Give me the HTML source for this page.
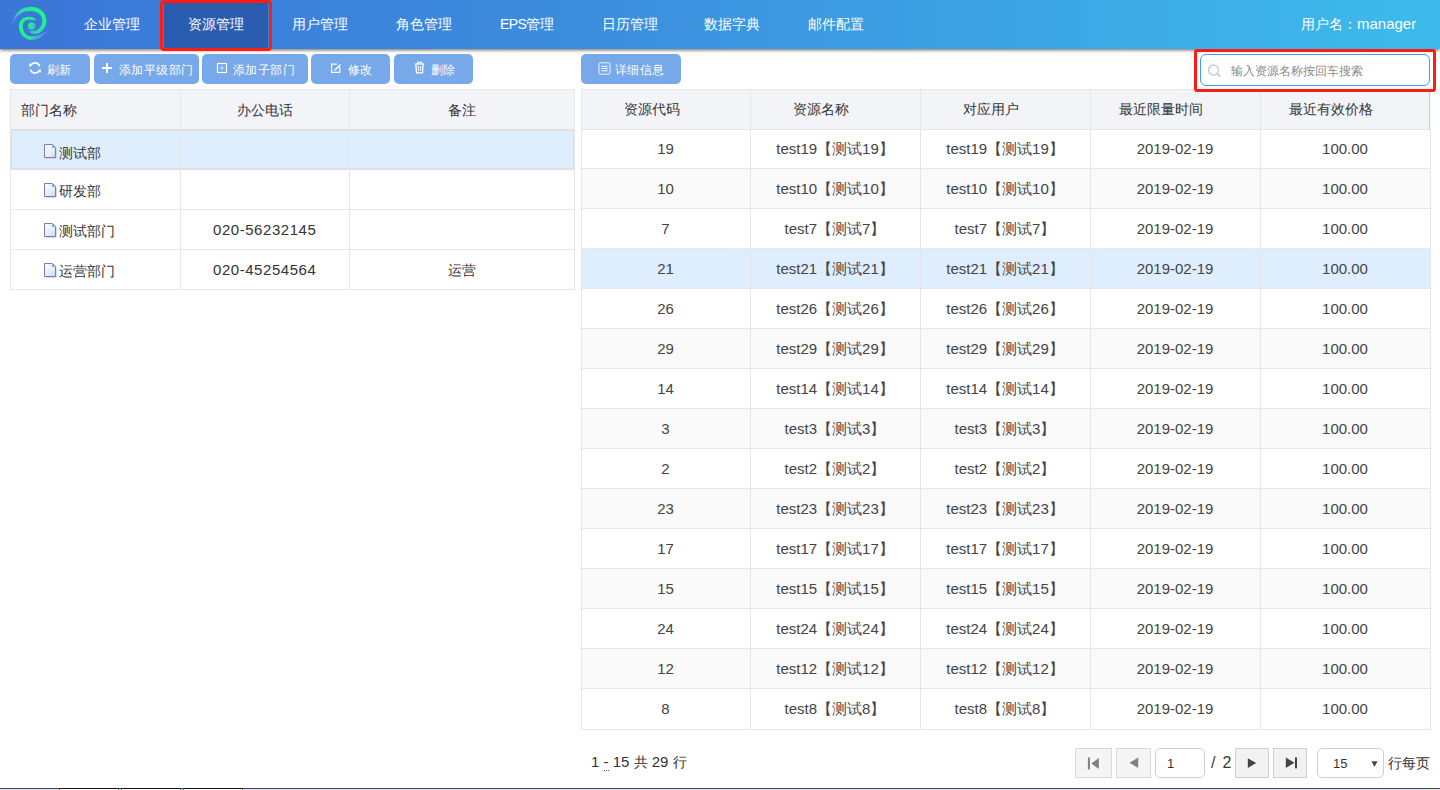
<!DOCTYPE html>
<html><head><meta charset="utf-8">
<style>
*{box-sizing:border-box;margin:0;padding:0}
html,body{width:1440px;height:790px;overflow:hidden;background:#fff;font-family:"Liberation Sans",sans-serif;position:relative}
#hdr{position:absolute;left:0;top:0;width:1440px;height:49px;background:linear-gradient(90deg,#3b75d8 0%,#3c8ddd 40%,#3dbbeb 100%);box-shadow:0 1.5px 3px rgba(50,40,30,0.6);z-index:2}
.nav{position:absolute;top:0;height:48px;width:104px;line-height:48px;text-align:center;color:#fff;font-size:14px;white-space:nowrap}
.nt{position:absolute;top:0;line-height:48px;color:#fff;font-size:14px;white-space:nowrap}
.nav.act{background:#2a5caf;height:49px}
#redtab{position:absolute;left:160px;top:0px;width:112px;height:51px;border:3px solid #ff1c12;border-radius:4px;z-index:3}
#user{position:absolute;left:1301px;top:0;line-height:48px;color:#fff;font-size:14px;white-space:nowrap}
.btn{position:absolute;top:54px;height:30px;background:#76a8ea;border-radius:5px;color:#fff;font-size:12.4px;letter-spacing:0.4px;line-height:30px;white-space:nowrap}
.btn span{position:absolute;top:0.5px}
.btn svg{position:absolute}
.lt{position:absolute;font-size:14px;color:#333;white-space:nowrap}
.vl{position:absolute;width:1px;background:#e6e6e6}
.hl{position:absolute;height:1px;background:#e6e6e6}
.rrow{position:absolute;left:581px;width:850px;height:40px}
.rc{position:absolute;height:40px;line-height:39px;text-align:center;font-size:15px;color:#444;white-space:nowrap}
.rh{position:absolute;top:89px;height:40px;line-height:40px;text-align:center;font-size:14px;color:#333;white-space:nowrap}
#search{position:absolute;left:1200px;top:54px;width:230px;height:32px;border:1px solid #3d9ef2;border-radius:6px;background:#fff}
#searchred{position:absolute;left:1194px;top:49px;width:242px;height:43px;border:3px solid #ff1c12;border-radius:3px;z-index:3}
#ph{position:absolute;left:30px;top:1px;line-height:30px;font-size:12px;color:#8a8a8a;white-space:nowrap}
.pg{position:absolute;top:748px;height:30px;border:1px solid #d9d9d9;background:#f5f5f5}
.fi{position:absolute;left:44px}
</style></head><body>
<div id="hdr">
  <svg style="position:absolute;left:8px;top:2px" width="44" height="44" viewBox="0 0 44 44">
    <defs>
      <linearGradient id="ga" x1="0" y1="0.8" x2="0.9" y2="0.3"><stop offset="0" stop-color="#6a8cf8" stop-opacity="0.7"/><stop offset="0.5" stop-color="#36d4b0"/><stop offset="1" stop-color="#18fa84"/></linearGradient>
      <linearGradient id="gb" x1="0.2" y1="0" x2="1" y2="0.3"><stop offset="0" stop-color="#18fa84"/><stop offset="0.55" stop-color="#24ea92"/><stop offset="1" stop-color="#5a9cf4" stop-opacity="0.8"/></linearGradient>
      <linearGradient id="gd" x1="0" y1="0" x2="1" y2="0"><stop offset="0" stop-color="#22f08e"/><stop offset="1" stop-color="#3cc0c8"/></linearGradient>
    </defs>
    <circle cx="23.7" cy="24" r="3.7" fill="url(#gd)"/>
    <path d="M4.2 25 C4.5 13 12 4.7 22.3 4.7 C32 4.7 38.4 11 38.4 18.4 C38.4 27 32 32 26.7 32 C24 32 22 30.5 20.3 29 C22.5 29.3 24.5 29.2 26.5 28.8 C31 28 34.3 23.5 34.3 18.4 C34.3 12.5 29 8.9 22.3 8.9 C13 8.9 6 15 4.2 25 Z" fill="url(#ga)"/>
    <path d="M28.4 18.4 C27 15.8 24 14.8 20.6 14.8 C15 14.8 10.9 19 10.9 24 C10.9 32 17 37.9 23.4 37.9 C31 37.9 37 33 39.8 27.6 C36.5 31.5 31 34.3 23.4 34.3 C18 34.3 14.8 29.5 14.8 24 C14.8 20.5 17 17.8 20.6 17.8 C24 17.8 26.5 18.2 28.4 18.4 Z" fill="url(#gb)"/>
  </svg>
  <div class="nav act" style="left:164px"></div>
  <div class="nt" style="left:84px">企业管理</div>
  <div class="nt" style="left:188px">资源管理</div>
  <div class="nt" style="left:292px">用户管理</div>
  <div class="nt" style="left:396px">角色管理</div>
  <div class="nt" style="left:500px"><span style="letter-spacing:-0.6px">EPS</span>管理</div>
  <div class="nt" style="left:602px">日历管理</div>
  <div class="nt" style="left:704px">数据字典</div>
  <div class="nt" style="left:808px">邮件配置</div>
  <div id="user">用户名：<span style="font-size:15px">manager</span></div>
</div>
<div id="redtab"></div>

<div class="btn" style="left:10px;width:80px">
  <svg style="left:18px;top:7px" width="14" height="14" viewBox="0 0 14 14"><path d="M11.6 5.2 A5 5 0 0 0 2.6 4.4 M2.4 8.8 A5 5 0 0 0 11.4 9.6" fill="none" stroke="#fff" stroke-width="1.7"/><path d="M1 2.5 L4.8 3.2 L1.6 6.2 Z M13 11.5 L9.2 10.8 L12.4 7.8 Z" fill="#fff"/></svg>
  <span style="left:37px">刷新</span></div>
<div class="btn" style="left:94px;width:105px">
  <svg style="left:7px;top:8px" width="12" height="12" viewBox="0 0 12 12"><path d="M6 1 V11 M1 6 H11" stroke="#fff" stroke-width="2"/></svg>
  <span style="left:25px">添加平级部门</span></div>
<div class="btn" style="left:202px;width:106px">
  <svg style="left:14px;top:8px" width="12" height="12" viewBox="0 0 12 12"><rect x="1.5" y="1.5" width="9" height="9" fill="none" stroke="#fff" stroke-width="1.2"/><path d="M6 3.5 V8.5 M3.5 6 H8.5" stroke="#fff" stroke-width="1.2" opacity="0.6"/></svg>
  <span style="left:31px">添加子部门</span></div>
<div class="btn" style="left:311px;width:79px">
  <svg style="left:19px;top:8px" width="12" height="12" viewBox="0 0 12 12"><path d="M7 2.2 H1.6 V10.4 H9.8 V5" fill="none" stroke="#fff" stroke-width="1.2"/><path d="M4.5 7.5 L10 2 L11 3 L5.5 8.5 L4.2 8.8 Z" fill="#fff"/></svg>
  <span style="left:37px">修改</span></div>
<div class="btn" style="left:394px;width:79px">
  <svg style="left:20px;top:7px" width="11" height="13" viewBox="0 0 11 13"><path d="M0.8 3 H10.2" stroke="#fff" stroke-width="1.3"/><path d="M3.5 3 V1.2 H7.5 V3" fill="none" stroke="#fff" stroke-width="1.1"/><path d="M1.9 3.5 L2.5 11.8 H8.5 L9.1 3.5" fill="none" stroke="#fff" stroke-width="1.3"/><path d="M4.3 5 V10 M6.7 5 V10" stroke="#fff" stroke-width="1"/></svg>
  <span style="left:37px">删除</span></div>
<div class="btn" style="left:581px;width:100px">
  <svg style="left:17px;top:7.5px" width="13" height="13" viewBox="0 0 13 13"><rect x="1" y="0.8" width="11" height="11.4" rx="1.5" fill="none" stroke="#fff" stroke-width="1" opacity="0.9"/><path d="M3.3 4.2 H9.7 M3.3 6.5 H9.7 M3.3 8.8 H9.7" stroke="#fff" stroke-width="1.1"/></svg>
  <span style="left:34px">详细信息</span></div>

<div id="search">
  <svg style="position:absolute;left:6px;top:9px" width="15" height="14" viewBox="0 0 15 14"><circle cx="6.5" cy="6" r="5" fill="none" stroke="#c9c9c9" stroke-width="1.3"/><path d="M10.2 9.6 L13.2 12.6" stroke="#c9c9c9" stroke-width="1.5"/></svg>
  <div id="ph">输入资源名称按回车搜索</div></div>
<div id="searchred"></div>

<!-- left table -->
<div style="position:absolute;left:10px;top:89px;width:565px;height:40px;background:#f3f4f8"></div>
<div style="position:absolute;left:11px;top:131px;width:563px;height:37px;background:#dfeeff"></div>
<div class="hl" style="left:10px;top:89px;width:565px"></div>
<div class="hl" style="left:10px;top:129px;width:565px;height:2px;background:#e0e0e0"></div>
<div class="hl" style="left:10px;top:168px;width:565px;height:2px;background:#e0e0e0"></div>
<div class="hl" style="left:10px;top:209px;width:565px"></div>
<div class="hl" style="left:10px;top:249px;width:565px"></div>
<div class="hl" style="left:10px;top:289px;width:565px"></div>
<div class="vl" style="left:10px;top:89px;height:201px"></div>
<div class="vl" style="left:180px;top:89px;height:201px"></div>
<div class="vl" style="left:349px;top:89px;height:201px"></div>
<div class="vl" style="left:574px;top:89px;height:201px"></div>
<div class="vl" style="left:11px;top:129px;height:41px;background:#e0e0e0"></div>
<div class="vl" style="left:573px;top:129px;height:41px;background:#e0e0e0"></div>
<div class="lt" style="left:21px;top:102px">部门名称</div>
<div class="lt" style="left:237px;top:102px">办公电话</div>
<div class="lt" style="left:448px;top:102px">备注</div>
<svg class="fi" style="top:144px" width="13" height="15" viewBox="0 0 13 15"><defs><linearGradient id="fg" x1="0" y1="0" x2="1" y2="1"><stop offset="0" stop-color="#fdfdff"/><stop offset="0.6" stop-color="#e6eefc"/><stop offset="1" stop-color="#bcd4f6"/></linearGradient></defs><path d="M1.8 14.2 H12.2 V4.5" fill="none" stroke="#c8c8d8" stroke-width="1"/><path d="M0.5 0.5 H8.3 L11.5 3.7 V13.5 H0.5 Z" fill="url(#fg)" stroke="#7c7cb0" stroke-width="1"/><path d="M8.3 0.8 V3.7 H11.2 Z" fill="#4c9ae8"/></svg>
<div class="lt" style="left:59px;top:144.5px">测试部</div>
<svg class="fi" style="top:183px" width="13" height="15" viewBox="0 0 13 15"><defs><linearGradient id="fg2" x1="0" y1="0" x2="1" y2="1"><stop offset="0" stop-color="#fdfdff"/><stop offset="0.6" stop-color="#e6eefc"/><stop offset="1" stop-color="#bcd4f6"/></linearGradient></defs><path d="M1.8 14.2 H12.2 V4.5" fill="none" stroke="#c8c8d8" stroke-width="1"/><path d="M0.5 0.5 H8.3 L11.5 3.7 V13.5 H0.5 Z" fill="url(#fg2)" stroke="#7c7cb0" stroke-width="1"/><path d="M8.3 0.8 V3.7 H11.2 Z" fill="#4c9ae8"/></svg>
<div class="lt" style="left:59px;top:183px">研发部</div>
<svg class="fi" style="top:223px" width="13" height="15" viewBox="0 0 13 15"><defs><linearGradient id="fg3" x1="0" y1="0" x2="1" y2="1"><stop offset="0" stop-color="#fdfdff"/><stop offset="0.6" stop-color="#e6eefc"/><stop offset="1" stop-color="#bcd4f6"/></linearGradient></defs><path d="M1.8 14.2 H12.2 V4.5" fill="none" stroke="#c8c8d8" stroke-width="1"/><path d="M0.5 0.5 H8.3 L11.5 3.7 V13.5 H0.5 Z" fill="url(#fg3)" stroke="#7c7cb0" stroke-width="1"/><path d="M8.3 0.8 V3.7 H11.2 Z" fill="#4c9ae8"/></svg>
<div class="lt" style="left:59px;top:223px">测试部门</div>
<svg class="fi" style="top:263px" width="13" height="15" viewBox="0 0 13 15"><defs><linearGradient id="fg4" x1="0" y1="0" x2="1" y2="1"><stop offset="0" stop-color="#fdfdff"/><stop offset="0.6" stop-color="#e6eefc"/><stop offset="1" stop-color="#bcd4f6"/></linearGradient></defs><path d="M1.8 14.2 H12.2 V4.5" fill="none" stroke="#c8c8d8" stroke-width="1"/><path d="M0.5 0.5 H8.3 L11.5 3.7 V13.5 H0.5 Z" fill="url(#fg4)" stroke="#7c7cb0" stroke-width="1"/><path d="M8.3 0.8 V3.7 H11.2 Z" fill="#4c9ae8"/></svg>
<div class="lt" style="left:59px;top:263px">运营部门</div>
<div class="lt" style="left:213px;top:221px;font-size:15px;letter-spacing:0.55px">020-56232145</div>
<div class="lt" style="left:213px;top:261px;font-size:15px;letter-spacing:0.55px">020-45254564</div>
<div class="lt" style="left:448px;top:262px">运营</div>

<!-- right table -->
<div style="position:absolute;left:581px;top:89px;width:850px;height:40px;background:#f3f4f8"></div>
<div class="rrow" style="top:129px;background:#fff"></div>
<div class="rc" style="left:581px;top:129px;width:169px">19</div>
<div class="rc" style="left:750px;top:129px;width:170px">test19【测试19】</div>
<div class="rc" style="left:920px;top:129px;width:170px">test19【测试19】</div>
<div class="rc" style="left:1090px;top:129px;width:170px">2019-02-19</div>
<div class="rc" style="left:1260px;top:129px;width:170px">100.00</div>
<div class="rrow" style="top:169px;background:#fafafa"></div>
<div class="rc" style="left:581px;top:169px;width:169px">10</div>
<div class="rc" style="left:750px;top:169px;width:170px">test10【测试10】</div>
<div class="rc" style="left:920px;top:169px;width:170px">test10【测试10】</div>
<div class="rc" style="left:1090px;top:169px;width:170px">2019-02-19</div>
<div class="rc" style="left:1260px;top:169px;width:170px">100.00</div>
<div class="rrow" style="top:209px;background:#fff"></div>
<div class="rc" style="left:581px;top:209px;width:169px">7</div>
<div class="rc" style="left:750px;top:209px;width:170px">test7【测试7】</div>
<div class="rc" style="left:920px;top:209px;width:170px">test7【测试7】</div>
<div class="rc" style="left:1090px;top:209px;width:170px">2019-02-19</div>
<div class="rc" style="left:1260px;top:209px;width:170px">100.00</div>
<div class="rrow" style="top:249px;background:#dfeeff"></div>
<div class="rc" style="left:581px;top:249px;width:169px">21</div>
<div class="rc" style="left:750px;top:249px;width:170px">test21【测试21】</div>
<div class="rc" style="left:920px;top:249px;width:170px">test21【测试21】</div>
<div class="rc" style="left:1090px;top:249px;width:170px">2019-02-19</div>
<div class="rc" style="left:1260px;top:249px;width:170px">100.00</div>
<div class="rrow" style="top:289px;background:#fff"></div>
<div class="rc" style="left:581px;top:289px;width:169px">26</div>
<div class="rc" style="left:750px;top:289px;width:170px">test26【测试26】</div>
<div class="rc" style="left:920px;top:289px;width:170px">test26【测试26】</div>
<div class="rc" style="left:1090px;top:289px;width:170px">2019-02-19</div>
<div class="rc" style="left:1260px;top:289px;width:170px">100.00</div>
<div class="rrow" style="top:329px;background:#fafafa"></div>
<div class="rc" style="left:581px;top:329px;width:169px">29</div>
<div class="rc" style="left:750px;top:329px;width:170px">test29【测试29】</div>
<div class="rc" style="left:920px;top:329px;width:170px">test29【测试29】</div>
<div class="rc" style="left:1090px;top:329px;width:170px">2019-02-19</div>
<div class="rc" style="left:1260px;top:329px;width:170px">100.00</div>
<div class="rrow" style="top:369px;background:#fff"></div>
<div class="rc" style="left:581px;top:369px;width:169px">14</div>
<div class="rc" style="left:750px;top:369px;width:170px">test14【测试14】</div>
<div class="rc" style="left:920px;top:369px;width:170px">test14【测试14】</div>
<div class="rc" style="left:1090px;top:369px;width:170px">2019-02-19</div>
<div class="rc" style="left:1260px;top:369px;width:170px">100.00</div>
<div class="rrow" style="top:409px;background:#fafafa"></div>
<div class="rc" style="left:581px;top:409px;width:169px">3</div>
<div class="rc" style="left:750px;top:409px;width:170px">test3【测试3】</div>
<div class="rc" style="left:920px;top:409px;width:170px">test3【测试3】</div>
<div class="rc" style="left:1090px;top:409px;width:170px">2019-02-19</div>
<div class="rc" style="left:1260px;top:409px;width:170px">100.00</div>
<div class="rrow" style="top:449px;background:#fff"></div>
<div class="rc" style="left:581px;top:449px;width:169px">2</div>
<div class="rc" style="left:750px;top:449px;width:170px">test2【测试2】</div>
<div class="rc" style="left:920px;top:449px;width:170px">test2【测试2】</div>
<div class="rc" style="left:1090px;top:449px;width:170px">2019-02-19</div>
<div class="rc" style="left:1260px;top:449px;width:170px">100.00</div>
<div class="rrow" style="top:489px;background:#fafafa"></div>
<div class="rc" style="left:581px;top:489px;width:169px">23</div>
<div class="rc" style="left:750px;top:489px;width:170px">test23【测试23】</div>
<div class="rc" style="left:920px;top:489px;width:170px">test23【测试23】</div>
<div class="rc" style="left:1090px;top:489px;width:170px">2019-02-19</div>
<div class="rc" style="left:1260px;top:489px;width:170px">100.00</div>
<div class="rrow" style="top:529px;background:#fff"></div>
<div class="rc" style="left:581px;top:529px;width:169px">17</div>
<div class="rc" style="left:750px;top:529px;width:170px">test17【测试17】</div>
<div class="rc" style="left:920px;top:529px;width:170px">test17【测试17】</div>
<div class="rc" style="left:1090px;top:529px;width:170px">2019-02-19</div>
<div class="rc" style="left:1260px;top:529px;width:170px">100.00</div>
<div class="rrow" style="top:569px;background:#fafafa"></div>
<div class="rc" style="left:581px;top:569px;width:169px">15</div>
<div class="rc" style="left:750px;top:569px;width:170px">test15【测试15】</div>
<div class="rc" style="left:920px;top:569px;width:170px">test15【测试15】</div>
<div class="rc" style="left:1090px;top:569px;width:170px">2019-02-19</div>
<div class="rc" style="left:1260px;top:569px;width:170px">100.00</div>
<div class="rrow" style="top:609px;background:#fff"></div>
<div class="rc" style="left:581px;top:609px;width:169px">24</div>
<div class="rc" style="left:750px;top:609px;width:170px">test24【测试24】</div>
<div class="rc" style="left:920px;top:609px;width:170px">test24【测试24】</div>
<div class="rc" style="left:1090px;top:609px;width:170px">2019-02-19</div>
<div class="rc" style="left:1260px;top:609px;width:170px">100.00</div>
<div class="rrow" style="top:649px;background:#fafafa"></div>
<div class="rc" style="left:581px;top:649px;width:169px">12</div>
<div class="rc" style="left:750px;top:649px;width:170px">test12【测试12】</div>
<div class="rc" style="left:920px;top:649px;width:170px">test12【测试12】</div>
<div class="rc" style="left:1090px;top:649px;width:170px">2019-02-19</div>
<div class="rc" style="left:1260px;top:649px;width:170px">100.00</div>
<div class="rrow" style="top:689px;background:#fff"></div>
<div class="rc" style="left:581px;top:689px;width:169px">8</div>
<div class="rc" style="left:750px;top:689px;width:170px">test8【测试8】</div>
<div class="rc" style="left:920px;top:689px;width:170px">test8【测试8】</div>
<div class="rc" style="left:1090px;top:689px;width:170px">2019-02-19</div>
<div class="rc" style="left:1260px;top:689px;width:170px">100.00</div>
<div class="vl" style="left:750px;top:89px;height:641px"></div>
<div class="vl" style="left:920px;top:89px;height:641px"></div>
<div class="vl" style="left:1090px;top:89px;height:641px"></div>
<div class="vl" style="left:1260px;top:89px;height:641px"></div>
<div class="hl" style="left:581px;top:129px;width:850px"></div>
<div class="hl" style="left:581px;top:168px;width:850px"></div>
<div class="hl" style="left:581px;top:208px;width:850px"></div>
<div class="hl" style="left:581px;top:248px;width:850px"></div>
<div class="hl" style="left:581px;top:288px;width:850px"></div>
<div class="hl" style="left:581px;top:328px;width:850px"></div>
<div class="hl" style="left:581px;top:368px;width:850px"></div>
<div class="hl" style="left:581px;top:408px;width:850px"></div>
<div class="hl" style="left:581px;top:448px;width:850px"></div>
<div class="hl" style="left:581px;top:488px;width:850px"></div>
<div class="hl" style="left:581px;top:528px;width:850px"></div>
<div class="hl" style="left:581px;top:568px;width:850px"></div>
<div class="hl" style="left:581px;top:608px;width:850px"></div>
<div class="hl" style="left:581px;top:648px;width:850px"></div>
<div class="hl" style="left:581px;top:688px;width:850px"></div>
<div class="hl" style="left:581px;top:729px;width:850px"></div>
<div class="hl" style="left:581px;top:89px;width:850px"></div>
<div class="vl" style="left:581px;top:89px;height:641px"></div>
<div class="vl" style="left:1430px;top:129px;height:601px"></div>
<div class="vl" style="left:1429px;top:89px;height:40px;background:#d0d0d0"></div>
<div class="rh" style="left:567px;width:170px">资源代码</div>
<div class="rh" style="left:736px;width:170px">资源名称</div>
<div class="rh" style="left:906px;width:170px">对应用户</div>
<div class="rh" style="left:1076px;width:170px">最近限量时间</div>
<div class="rh" style="left:1246px;width:170px">最近有效价格</div>

<!-- pagination -->
<div class="lt" style="left:591px;top:753px;font-size:15px">1 <span style="border-bottom:1px dotted #555">-</span> 15 <span style="font-size:14px">共</span> 29 <span style="font-size:14px">行</span></div>
<div class="pg" style="left:1075px;width:37px"><svg style="position:absolute;left:11px;top:8px" width="13" height="13" viewBox="0 0 13 13"><rect x="0.9" y="0.5" width="2" height="12" fill="#808080"/><path d="M4.3 6.5 L11.8 1 V12 Z" fill="#808080"/></svg></div>
<div class="pg" style="left:1116px;width:35px"><svg style="position:absolute;left:12px;top:8px" width="10" height="12" viewBox="0 0 10 12"><path d="M0.6 5.7 L9.2 0.5 V11 Z" fill="#808080"/></svg></div>
<div class="pg" style="left:1155px;width:50px;background:#fff;border-color:#cfcfcf;border-radius:5px"><div style="position:absolute;left:11px;top:0;line-height:29px;font-size:13px;color:#333">1</div></div>
<div class="lt" style="left:1211px;top:754px;font-size:16px;color:#3a3a3a">/<span style="margin-left:7px">2</span></div>
<div class="pg" style="left:1235px;width:34px;background:#f2f2f2;border-color:#cfcfcf"><svg style="position:absolute;left:11px;top:9px" width="10" height="11" viewBox="0 0 10 11"><path d="M0.8 0.2 L9.2 5.1 L0.8 10 Z" fill="#444"/></svg></div>
<div class="pg" style="left:1273px;width:34px;background:#f2f2f2;border-color:#cfcfcf"><svg style="position:absolute;left:11px;top:8px" width="13" height="12" viewBox="0 0 13 12"><path d="M0.8 0.6 L9.4 5.8 L0.8 11 Z" fill="#444"/><rect x="10" y="0.4" width="2" height="11" fill="#444"/></svg></div>
<div class="pg" style="left:1317px;width:67px;background:#fff;border-color:#cfcfcf;border-radius:5px"><div style="position:absolute;left:15px;top:0;line-height:30px;font-size:13px;color:#333">15</div><svg style="position:absolute;left:53px;top:12px" width="7" height="7" viewBox="0 0 7 7"><path d="M0.5 0.2 H6.5 L3.5 6 Z" fill="#444"/></svg></div>
<div class="lt" style="left:1388px;top:755px">行每页</div>

<!-- bottom strip -->
<div style="position:absolute;left:0;top:788px;width:1440px;height:1px;background:#3c4654"></div>
<div style="position:absolute;left:0;top:789px;width:1440px;height:1px;background:#d6e3f5"></div>
<div style="position:absolute;left:59px;top:788px;width:60px;height:2px;background:#fff;border-top:1px solid #111;border-left:1px solid #778;border-right:1px solid #778"></div>
<div style="position:absolute;left:121px;top:788px;width:60px;height:2px;background:#fff;border-top:1px solid #111;border-left:1px solid #778;border-right:1px solid #778"></div>
<div style="position:absolute;left:183px;top:788px;width:60px;height:2px;background:#fff;border-top:1px solid #111;border-left:1px solid #778;border-right:1px solid #778"></div>
<div style="position:absolute;left:1425px;top:789px;width:15px;height:1px;background:#e8e8e8"></div>
</body></html>
